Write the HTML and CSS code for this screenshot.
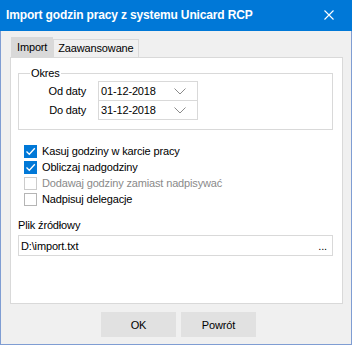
FILE: index.html
```html
<!DOCTYPE html>
<html>
<head>
<meta charset="utf-8">
<link rel="stylesheet" href="styles.css">
</head>
<body>
<div class="window">
  <div class="titlebar">
    <span class="title">Import godzin pracy z systemu Unicard RCP</span>
    <svg class="close" width="10" height="10" viewBox="0 0 10 10"><path d="M0.5 0.5 L9.5 9.5 M9.5 0.5 L0.5 9.5" stroke="#fff" stroke-width="1.1" fill="none"/></svg>
  </div>
  <div class="content">
    <div class="tabs">
      <div class="tab active">Import</div>
      <div class="tab">Zaawansowane</div>
    </div>
    <div class="panel">
      <div class="group">
        <span class="group-label">Okres</span>
        <div class="row">
          <span class="row-label">Od daty</span>
          <div class="date">01-12-2018<svg class="chev" width="12" height="7" viewBox="0 0 12 7"><path d="M0.5 0.5 L6 6 L11.5 0.5" stroke="#8a8a8a" fill="none" stroke-width="1"/></svg></div>
        </div>
        <div class="row second">
          <span class="row-label">Do daty</span>
          <div class="date">31-12-2018<svg class="chev" width="12" height="7" viewBox="0 0 12 7"><path d="M0.5 0.5 L6 6 L11.5 0.5" stroke="#8a8a8a" fill="none" stroke-width="1"/></svg></div>
        </div>
      </div>
      <div class="checks">
        <div class="check"><span class="box checked"><svg width="11" height="11" viewBox="0 0 11 11"><path d="M1.5 5.5 L4.3 8.3 L9.8 2.2" stroke="#fff" stroke-width="1.3" fill="none"/></svg></span><span>Kasuj godziny w karcie pracy</span></div>
        <div class="check"><span class="box checked"><svg width="11" height="11" viewBox="0 0 11 11"><path d="M1.5 5.5 L4.3 8.3 L9.8 2.2" stroke="#fff" stroke-width="1.3" fill="none"/></svg></span><span>Obliczaj nadgodziny</span></div>
        <div class="check disabled"><span class="box"></span><span>Dodawaj godziny zamiast nadpisywać</span></div>
        <div class="check"><span class="box plain"></span><span>Nadpisuj delegacje</span></div>
      </div>
      <div class="file-label">Plik źródłowy</div>
      <div class="file-input"><span>D:\import.txt</span><span class="dots">...</span></div>
    </div>
    <div class="buttons">
      <div class="btn">OK</div>
      <div class="btn">Powrót</div>
    </div>
  </div>
</div>
</body>
</html>
```
FILE: styles.css
```css
* { box-sizing: border-box; }
html, body { margin: 0; padding: 0; }
body {
  font-family: "Liberation Sans", Arial, sans-serif;
  font-size: 11px;
  letter-spacing: -0.15px;
  color: #000;
  background: #f0f0f0;
}
.window {
  width: 352px;
  height: 345px;
  background: #f0f0f0;
  border: 1px solid #7f9dd3;
  border-top: none;
  display: flex;
  flex-direction: column;
}
.titlebar {
  height: 31px;
  margin: 0 -1px;
  background: #0078d7;
  display: flex;
  align-items: center;
  justify-content: space-between;
  padding: 0 18px 1px 6px;
}
.title {
  color: #fff;
  font-family: "Liberation Sans", Arial, sans-serif;
  font-weight: 700;
  font-size: 12px;
  letter-spacing: -0.15px;
}
.close { display: block; }
.content {
  padding: 6px 8px 0 9px;
  display: flex;
  flex-direction: column;
}
.tabs {
  display: flex;
  align-items: flex-end;
  padding-left: 1px;
  height: 20px;
}
.tab {
  height: 18px;
  padding: 0 4px;
  border: 1px solid #d9d9d9;
  border-bottom: none;
  background: #f0f0f0;
  line-height: 17px;
}
.tab.active {
  height: 20px;
  background: #d9d9d9;
  border-color: #d9d9d9;
  line-height: 19px;
  padding: 0 5px;
}
.panel {
  height: 247px;
  background: #fff;
  border: 1px solid #d9d9d9;
  padding: 15px 9px 0 7px;
  display: flex;
  flex-direction: column;
}
.group {
  position: relative;
  border: 1px solid #d9d9d9;
  padding: 7px 0 9px 0;
}
.group-label {
  position: absolute;
  top: -8px;
  left: 11px;
  background: #fff;
  padding: 0 1px;
  line-height: 14px;
}
.row {
  display: flex;
  align-items: center;
}
.row.second { margin-top: -1px; }
.row-label {
  width: 67px;
  text-align: right;
  margin-right: 12px;
}
.date {
  width: 100px;
  height: 20px;
  border: 1px solid #d9d9d9;
  display: flex;
  align-items: center;
  justify-content: space-between;
  padding: 0 11px 0 2px;
}
.chev { display: block; }
.checks {
  margin-top: 13px;
  padding-left: 6px;
  display: flex;
  flex-direction: column;
}
.check {
  height: 16px;
  display: flex;
  align-items: center;
}
.box {
  width: 13px;
  height: 13px;
  border: 1px solid #cccccc;
  background: #fff;
  margin-right: 5px;
  display: flex;
  align-items: center;
  justify-content: center;
}
.box.plain { border-color: #b5b5b5; }
.box.checked { background: #0078d7; border-color: #0078d7; }
.box svg { display: block; }
.check.disabled { color: #8a8a8a; }
.file-label {
  margin-top: 11px;
  line-height: 14px;
}
.file-input {
  margin-top: 3px;
  width: 315px;
  height: 21px;
  border: 1px solid #d9d9d9;
  display: flex;
  align-items: center;
  justify-content: space-between;
  padding: 0 5px 0 2px;
}
.buttons {
  display: flex;
  justify-content: center;
  gap: 5px;
  margin-top: 8px;
  padding-left: 4px;
}
.btn {
  width: 75px;
  height: 25px;
  background: #e1e1e1;
  display: flex;
  align-items: center;
  justify-content: center;
}
```
